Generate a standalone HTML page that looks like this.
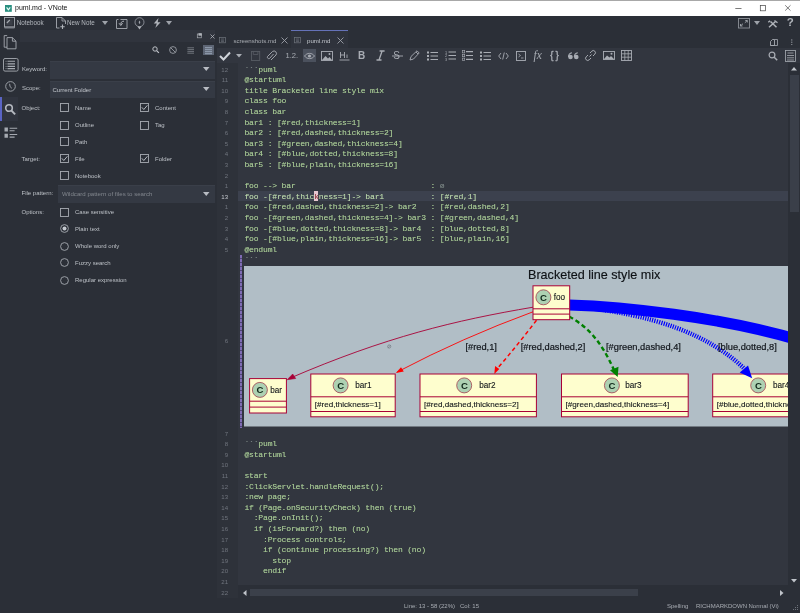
<!DOCTYPE html>
<html><head><meta charset="utf-8">
<style>
*{margin:0;padding:0;box-sizing:border-box}
html,body{width:800px;height:613px;overflow:hidden;background:#2b2f37;font-family:"Liberation Sans",sans-serif;position:relative}
.a{position:absolute}
svg.a{overflow:visible}
#title{left:0;top:0;width:800px;height:15.6px;background:#fff;border-top:1px solid #a8a8a8}
.tt{font-size:7px;color:#111;top:4px;left:15px;line-height:8px}
.lbl{position:absolute;font-size:6px;line-height:8px;color:#bcc0c6;white-space:nowrap}
.tb{position:absolute;font-size:6.3px;line-height:8px;color:#b4b8be;white-space:nowrap}
.tab{position:absolute;font-size:6.1px;line-height:8px;white-space:nowrap;top:36.6px}
.inp{position:absolute;background:#343943}
.ln{position:absolute;left:208px;width:20px;text-align:right;font-family:"Liberation Sans",sans-serif;font-size:6.1px;line-height:10.6px;color:#70757e;letter-spacing:-0.05px}
.cl{position:absolute;left:244.4px;font-family:"Liberation Mono",monospace;font-size:8.1px;letter-spacing:-0.205px;line-height:10.6px;color:#a8cb95;text-shadow:0 0 0.5px rgba(168,203,149,0.5);white-space:pre}
.cl .bt{color:#9499a2}
.cur{color:#bcd8ad}
.lncur{color:#c4c8ce}
.q{color:#6f757e}
.cur .k{color:#8a2030}
.st{position:absolute;font-size:6px;line-height:8px;color:#a8acb3;white-space:nowrap;top:601.5px}
</style></head><body>
<div id="root" style="position:absolute;left:0;top:0;width:800px;height:613px;will-change:transform">
<!-- title bar -->
<div id="title" class="a"></div>
<svg class="a" style="left:5px;top:4.5px" width="7" height="7" viewBox="0 0 7 7"><rect width="6.8" height="6.8" fill="#2a8f80"/><path d="M1.6 2.4 L3.4 4.8 L5.2 2.4" stroke="#e8fff8" stroke-width="1.2" fill="none"/></svg>
<div class="a tt">puml.md - VNote</div>
<svg class="a" style="left:734px;top:3px" width="60" height="10"><path d="M1.3 5.5h6.2" stroke="#444" stroke-width="0.7"/><rect x="26.3" y="2.4" width="5.2" height="5.4" fill="none" stroke="#444" stroke-width="0.7"/><path d="M51.2 2.3l5.3 5.3M56.5 2.3l-5.3 5.3" stroke="#444" stroke-width="0.7"/></svg>

<!-- main toolbar -->
<svg class="a" style="left:3.8px;top:17.3px" width="12" height="12"><rect x="0.5" y="0.5" width="10" height="9.5" fill="none" stroke="#a6aab1" stroke-width="0.9"/><path d="M0.5 10h10v1H0.5" fill="none" stroke="#8e9299" stroke-width="0.8"/><rect x="2.2" y="2.2" width="6.5" height="6" fill="#3a3e47"/><path d="M2.8 6l3-3" stroke="#a6aab1" stroke-width="1.1"/></svg>
<div class="tb" style="left:16.7px;top:19.3px">Notebook</div>
<svg class="a" style="left:55.5px;top:17.2px" width="12" height="13"><path d="M3.5 11H0.5V0.5h5.5l3.5 3.5V7" fill="none" stroke="#a6aab1" stroke-width="0.9"/><path d="M6 0.5v3.5h3.5" fill="none" stroke="#a6aab1" stroke-width="0.8"/><path d="M6.5 7.5v4.5M4.3 9.7h4.4" stroke="#b0b4ba" stroke-width="1.1"/></svg>
<div class="tb" style="left:67px;top:19.3px">New Note</div>
<svg class="a" style="left:102px;top:21px" width="7" height="5"><path d="M0 0h6l-3 4z" fill="#9ea2a9"/></svg>
<svg class="a" style="left:116px;top:17.5px" width="12" height="11"><path d="M0.5 1.5v9h10.5v-9h-6.5" fill="none" stroke="#a6aab1" stroke-width="0.9"/><path d="M1 1.5h1.5" stroke="#a6aab1" stroke-width="0.9"/><path d="M8 3.2C6 3.2 4.8 4 4.8 6.5M3 5.2l1.8 2.3 1.8-2.3" fill="none" stroke="#b0b4ba" stroke-width="1"/></svg>
<svg class="a" style="left:133.5px;top:16.5px" width="11" height="13"><circle cx="5.5" cy="5.2" r="4.5" fill="none" stroke="#9ea2a9" stroke-width="0.8"/><path d="M3.5 9.5h4l-2 3z" fill="#b0b4ba"/><path d="M5.5 3.5c-1 1.2-1 2.5 0 3.5c1-1 1-2.3 0-3.5z" fill="#9ea2a9"/></svg>
<svg class="a" style="left:152.5px;top:18px" width="9" height="10"><path d="M5.5 0L0.8 5.5h3L2.3 10 7.6 4.2H4.7z" fill="#b0b4ba"/></svg>
<svg class="a" style="left:166px;top:21px" width="7" height="5"><path d="M0 0h6l-3 4z" fill="#9ea2a9"/></svg>
<svg class="a" style="left:738px;top:17.5px" width="12" height="11"><rect x="0.5" y="0.5" width="11" height="9.5" fill="none" stroke="#8d9198" stroke-width="0.9"/><path d="M2.5 8l2.5-2.3M2.5 8v-2M2.5 8h2M9.3 2.5L6.8 4.8M9.3 2.5v2M9.3 2.5h-2" stroke="#a6aab1" stroke-width="0.9" fill="none"/></svg>
<svg class="a" style="left:754px;top:21px" width="7" height="5"><path d="M0 0h6l-3 4z" fill="#9ea2a9"/></svg>
<svg class="a" style="left:768px;top:19.5px" width="10" height="8"><path d="M1 7.2L7.5 1.5M2.5 1.5l6 5.7" stroke="#b0b4ba" stroke-width="1.5" fill="none"/><path d="M6.5 0.5l3 2.2M0.3 2.2l1.8-1.5" stroke="#b0b4ba" stroke-width="1.3" fill="none"/></svg>
<div class="a" style="left:786.8px;top:16px;font-size:11.5px;font-weight:bold;color:#b0b4ba;line-height:13px">?</div>

<!-- activity bar -->
<div class="a" style="left:0;top:97.3px;width:18.3px;height:23.4px;background:#30343e"></div>
<div class="a" style="left:0;top:97.3px;width:2.3px;height:23.4px;background:#5a64c4"></div>
<svg class="a" style="left:0px;top:34px" width="18" height="16"><path d="M7.2 1.6H4.2V13.2H7" fill="none" stroke="#a6aab1" stroke-width="0.9"/><path d="M7 3.6H12.4l3.6 3.6V14.8H7z M12.4 3.6v3.6h3.6" fill="none" stroke="#a6aab1" stroke-width="0.9"/></svg>
<svg class="a" style="left:2.9px;top:57.6px" width="16" height="14"><rect x="0.5" y="0.5" width="14.6" height="12.6" rx="1.5" fill="none" stroke="#a6aab1" stroke-width="0.9"/><path d="M2.6 3.3h0.9M2.6 5.9h0.9M2.6 8.4h0.9M2.6 10.6h0.9" stroke="#8f939a" stroke-width="1"/><path d="M4.5 3.3h7.5M4.5 5.9h7.5M4.5 8.4h7.5M4.5 10.6h7.5" stroke="#a6aab1" stroke-width="1.1"/></svg>
<svg class="a" style="left:4.5px;top:81px" width="11" height="11"><circle cx="5.5" cy="5.4" r="4.8" fill="none" stroke="#a6aab1" stroke-width="0.9"/><path d="M4.6 2.8l0.5 2.9 1.8 1.6" fill="none" stroke="#a6aab1" stroke-width="0.9"/></svg>
<svg class="a" style="left:4px;top:103px" width="13" height="13"><circle cx="5" cy="5" r="3.3" fill="none" stroke="#b5b9c0" stroke-width="1.6"/><path d="M7.5 7.6l3.6 3.8" stroke="#b5b9c0" stroke-width="2"/></svg>
<svg class="a" style="left:3.5px;top:126.5px" width="14" height="12"><path d="M0.5 0.5h3.4v4h-3.4zM0.5 6.8h3.4v4h-3.4z" fill="#a6aab1"/><path d="M5.6 1.2h7.6M5.6 3.8h5M5.6 7.5h7.6M5.6 10.1h5" stroke="#a6aab1" stroke-width="1.1"/></svg>

<!-- search panel -->
<div class="a" style="left:20px;top:30px;width:195px;height:12px;background:#30343d"></div>
<svg class="a" style="left:196.5px;top:33.3px" width="5" height="5"><rect x="0.3" y="1" width="4" height="3.8" fill="none" stroke="#a6aab1" stroke-width="0.7"/><rect x="1.5" y="0.2" width="3.3" height="2.5" fill="#b0b4ba"/></svg>
<svg class="a" style="left:209.8px;top:33.8px" width="5" height="5"><path d="M0.5 0.5l4 4M4.5 0.5l-4 4" stroke="#b0b4ba" stroke-width="0.8"/></svg>
<svg class="a" style="left:151.5px;top:46px" width="8" height="8"><circle cx="3" cy="3" r="2.2" fill="none" stroke="#c0c4ca" stroke-width="1"/><path d="M4.6 4.6l2.3 2.3" stroke="#c0c4ca" stroke-width="1.2"/></svg>
<svg class="a" style="left:168.5px;top:45.5px" width="8" height="8"><circle cx="4" cy="4" r="3.4" fill="none" stroke="#a6aab1" stroke-width="0.8"/><path d="M1.8 1.8l4.4 4.4" stroke="#a6aab1" stroke-width="0.8"/></svg>
<svg class="a" style="left:187px;top:46.5px" width="8" height="7"><path d="M0.5 0.8h6.5M0.5 2.6h6.5M0.5 4.4h6.5M0.5 6.2h6.5" stroke="#80858d" stroke-width="0.8"/><path d="M0.5 0.8h1M0.5 2.6h1M0.5 4.4h1M0.5 6.2h1" stroke="#5a5f67" stroke-width="0.8"/></svg>
<div class="a" style="left:203px;top:44.5px;width:11px;height:10.5px;background:#5d6574"></div>
<svg class="a" style="left:204px;top:45.5px" width="9" height="9"><path d="M1 1.7h7M1 3.7h7M1 5.7h7M1 7.7h7" stroke="#a5b2c6" stroke-width="0.8"/></svg>

<div class="lbl" style="left:22px;top:64.5px">Keyword:</div>
<div class="inp" style="left:50px;top:60.6px;width:165px;height:18.7px;border-top:1px solid #3a3f49"></div>
<svg class="a" style="left:203px;top:67px" width="7" height="5"><path d="M0 0h6.5l-3.25 4z" fill="#b8bcc3"/></svg>
<div class="lbl" style="left:22px;top:84px">Scope:</div>
<div class="inp" style="left:50px;top:80.9px;width:165px;height:16.9px;border-top:1px solid #3a3f49"></div>
<div class="lbl" style="left:52.5px;top:86px;color:#c3c7cd">Current Folder</div>
<svg class="a" style="left:203px;top:87px" width="7" height="5"><path d="M0 0h6.5l-3.25 4z" fill="#b8bcc3"/></svg>

<div class="lbl" style="left:21.5px;top:103.5px">Object:</div>
<div class="lbl" style="left:21.5px;top:154.5px">Target:</div>
<div class="lbl" style="left:21.5px;top:188.5px">File pattern:</div>
<div class="lbl" style="left:21.5px;top:208px">Options:</div>

<!-- checkboxes -->
<svg class="a" style="left:60px;top:103.00px" width="9" height="9"><rect x="0.5" y="0.5" width="8" height="8" fill="none" stroke="#a6aab1" stroke-width="0.9"/></svg>
<div class="lbl" style="left:75px;top:103.50px">Name</div>
<svg class="a" style="left:140px;top:103.00px" width="9" height="9"><rect x="0.5" y="0.5" width="8" height="8" fill="none" stroke="#a6aab1" stroke-width="0.9"/><path d="M1.8 4.3l2 2.2 3.6-4.2" fill="none" stroke="#c5c9cf" stroke-width="0.9"/></svg>
<div class="lbl" style="left:155px;top:103.50px">Content</div>
<svg class="a" style="left:60px;top:120.50px" width="9" height="9"><rect x="0.5" y="0.5" width="8" height="8" fill="none" stroke="#a6aab1" stroke-width="0.9"/></svg>
<div class="lbl" style="left:75px;top:121.00px">Outline</div>
<svg class="a" style="left:140px;top:120.50px" width="9" height="9"><rect x="0.5" y="0.5" width="8" height="8" fill="none" stroke="#a6aab1" stroke-width="0.9"/></svg>
<div class="lbl" style="left:155px;top:121.00px">Tag</div>
<svg class="a" style="left:60px;top:137.25px" width="9" height="9"><rect x="0.5" y="0.5" width="8" height="8" fill="none" stroke="#a6aab1" stroke-width="0.9"/></svg>
<div class="lbl" style="left:75px;top:137.75px">Path</div>
<svg class="a" style="left:60px;top:154.25px" width="9" height="9"><rect x="0.5" y="0.5" width="8" height="8" fill="none" stroke="#a6aab1" stroke-width="0.9"/><path d="M1.8 4.3l2 2.2 3.6-4.2" fill="none" stroke="#c5c9cf" stroke-width="0.9"/></svg>
<div class="lbl" style="left:75px;top:154.75px">File</div>
<svg class="a" style="left:140px;top:154.25px" width="9" height="9"><rect x="0.5" y="0.5" width="8" height="8" fill="none" stroke="#a6aab1" stroke-width="0.9"/><path d="M1.8 4.3l2 2.2 3.6-4.2" fill="none" stroke="#c5c9cf" stroke-width="0.9"/></svg>
<div class="lbl" style="left:155px;top:154.75px">Folder</div>
<svg class="a" style="left:60px;top:171.00px" width="9" height="9"><rect x="0.5" y="0.5" width="8" height="8" fill="none" stroke="#a6aab1" stroke-width="0.9"/></svg>
<div class="lbl" style="left:75px;top:171.50px">Notebook</div>
<svg class="a" style="left:60px;top:207.50px" width="9" height="9"><rect x="0.5" y="0.5" width="8" height="8" fill="none" stroke="#a6aab1" stroke-width="0.9"/></svg>
<div class="lbl" style="left:75px;top:208.00px">Case sensitive</div>
<svg class="a" style="left:60px;top:224.25px" width="9" height="9"><circle cx="4.5" cy="4.5" r="3.9" fill="none" stroke="#a6aab1" stroke-width="0.9"/><circle cx="4.5" cy="4.5" r="2" fill="#c5c9cf"/></svg>
<div class="lbl" style="left:75px;top:224.75px">Plain text</div>
<svg class="a" style="left:60px;top:241.75px" width="9" height="9"><circle cx="4.5" cy="4.5" r="3.9" fill="none" stroke="#a6aab1" stroke-width="0.9"/></svg>
<div class="lbl" style="left:75px;top:242.25px">Whole word only</div>
<svg class="a" style="left:60px;top:258.00px" width="9" height="9"><circle cx="4.5" cy="4.5" r="3.9" fill="none" stroke="#a6aab1" stroke-width="0.9"/></svg>
<div class="lbl" style="left:75px;top:258.50px">Fuzzy search</div>
<svg class="a" style="left:60px;top:275.50px" width="9" height="9"><circle cx="4.5" cy="4.5" r="3.9" fill="none" stroke="#a6aab1" stroke-width="0.9"/></svg>
<div class="lbl" style="left:75px;top:276.00px">Regular expression</div>

<div class="inp" style="left:57.5px;top:185px;width:157.5px;height:17.5px;border-top:1px solid #3a3f49"></div>
<div class="lbl" style="left:62px;top:189.8px;color:#82878e;font-size:6.1px">Wildcard pattern of files to search</div>
<svg class="a" style="left:203px;top:192px" width="7" height="5"><path d="M0 0h6.5l-3.25 4z" fill="#b8bcc3"/></svg>

<!-- editor tabs -->
<svg class="a" style="left:219.4px;top:36.8px" width="7" height="6.2"><rect x="0.4" y="0.4" width="6.2" height="5.4" fill="none" stroke="#6f747c" stroke-width="0.7"/><path d="M2 2h3M2 3.3h3M2 4.5h3" stroke="#6f747c" stroke-width="0.6"/></svg>
<div class="tab" style="left:233.4px;color:#a9adb3">screenshots.md</div>
<svg class="a" style="left:281px;top:37.2px" width="7" height="7"><path d="M0.5 0.5l6 6M6.5 0.5l-6 6" stroke="#9ea2a9" stroke-width="0.9"/></svg>
<div class="a" style="left:291px;top:30px;width:57px;height:19px;background:#2f333c"></div>
<div class="a" style="left:291px;top:30.2px;width:57px;height:1.2px;background:#6572b8"></div>
<svg class="a" style="left:293.5px;top:36.8px" width="7" height="6.2"><rect x="0.4" y="0.4" width="6.2" height="5.4" fill="none" stroke="#6f747c" stroke-width="0.7"/><path d="M2 2h3M2 3.3h3M2 4.5h3" stroke="#6f747c" stroke-width="0.6"/></svg>
<div class="tab" style="left:307px;color:#c4c8ce">puml.md</div>
<svg class="a" style="left:337px;top:37.2px" width="7" height="7"><path d="M0.5 0.5l6 6M6.5 0.5l-6 6" stroke="#9ea2a9" stroke-width="0.9"/></svg>
<svg class="a" style="left:770px;top:38.8px" width="9" height="7"><path d="M0.5 6.5V2.5L2.5 0.5H4.5V6.5z" fill="none" stroke="#a6aab1" stroke-width="0.9"/><path d="M4.5 0.5H7.5V6.5H0.5" fill="none" stroke="#a6aab1" stroke-width="0.8"/></svg>
<svg class="a" style="left:790px;top:39px" width="4" height="7"><circle cx="1.8" cy="0.9" r="0.6" fill="#a6aab1"/><circle cx="1.8" cy="3.2" r="0.6" fill="#a6aab1"/><circle cx="1.8" cy="5.5" r="0.6" fill="#a6aab1"/></svg>

<!-- editor background -->
<div class="a" style="left:217px;top:48.2px;width:583px;height:539.8px;background:#32363f"></div>
<div class="a" style="left:217px;top:63px;width:20.5px;height:535px;background:#2e323a"></div>
<div class="a" style="left:237.5px;top:190.6px;width:551px;height:10px;background:#3c414e"></div>
<div class="a" style="left:313.9px;top:190.8px;width:4.6px;height:10.2px;background:#e6c6cf"></div>

<!-- editor toolbar -->
<svg class="a" style="left:219.00px;top:50.50px" width="12" height="10" viewBox="0 0 12 10"><path d="M1 5l3.5 3.5L11 1.5" fill="none" stroke="#d0d4da" stroke-width="2"/></svg>
<svg class="a" style="left:235.60px;top:53.50px" width="6" height="4" viewBox="0 0 6 4"><path d="M0 0h6L3 3.5z" fill="#a9adb4"/></svg>
<svg class="a" style="left:250.80px;top:50.50px" width="9" height="10" viewBox="0 0 9 10"><rect x="0.5" y="0.5" width="8.2" height="9" fill="none" stroke="#585c64" stroke-width="0.9"/><path d="M2.3 0.5v3h4.6v-3" fill="none" stroke="#585c64" stroke-width="0.8"/></svg>
<svg class="a" style="left:266.20px;top:50.00px" width="10" height="11" viewBox="0 0 10 11"><path d="M7.5 4L3.5 8.5a1.5 1.5 0 0 1-2-2L6.5 1.5a2.5 2.5 0 0 1 3.5 3.5L5 10" fill="none" stroke="#a9adb4" stroke-width="0.9"/></svg>
<div class="a" style="left:285.5px;top:51px;font-size:7.6px;line-height:9px;color:#a9adb4">1.2.</div>
<div class="a" style="left:302.5px;top:48.5px;width:13px;height:13px;background:#4b515d"></div>
<svg class="a" style="left:303.50px;top:51.50px" width="11" height="8" viewBox="0 0 11 8"><path d="M0.5 4C3 0.5 8 0.5 10.5 4 8 7.5 3 7.5 0.5 4z" fill="none" stroke="#a9adb4" stroke-width="0.9"/><circle cx="5.5" cy="4" r="1.6" fill="#a9adb4"/></svg>
<svg class="a" style="left:320.70px;top:50.50px" width="12" height="10" viewBox="0 0 12 10"><rect x="0.5" y="0.5" width="11" height="9" fill="none" stroke="#a9adb4" stroke-width="0.9"/><path d="M1 9l3.5-4 2.5 2.5 1.5-1.5L11 9z" fill="#a9adb4"/><circle cx="8.5" cy="3" r="1" fill="#a9adb4"/></svg>
<svg class="a" style="left:338.90px;top:50.50px" width="11" height="10" viewBox="0 0 11 10"><path d="M1.5 1v6M5.5 1v6M1.5 4h4M8 3.5v3.5M0.5 9h10" fill="none" stroke="#a9adb4" stroke-width="0.9"/></svg>
<div class="a" style="left:358px;top:49.5px;font-size:10px;font-weight:bold;line-height:12px;color:#a9adb4">B</div>
<svg class="a" style="left:375.50px;top:50.00px" width="9" height="11" viewBox="0 0 9 11"><path d="M3.6 1h5M0.5 10h5M6.1 1L3 10" fill="none" stroke="#a9adb4" stroke-width="1.3"/></svg>
<div class="a" style="left:393.3px;top:49.5px;font-size:10px;line-height:12px;color:#a9adb4">S</div>
<svg class="a" style="left:392.10px;top:54.50px" width="11" height="2" viewBox="0 0 11 2"><path d="M0 1h11" stroke="#a9adb4" stroke-width="0.9"/></svg>
<svg class="a" style="left:409.30px;top:50.00px" width="11" height="11" viewBox="0 0 11 11"><path d="M1 10l1-3.5L8 0.8l2.2 2.2L4.5 9z M7 2l2 2" fill="none" stroke="#a9adb4" stroke-width="0.9"/></svg>
<svg class="a" style="left:427.00px;top:50.50px" width="11" height="10" viewBox="0 0 11 10"><path d="M0 1.5h2M0 5h2M0 8.5h2" stroke="#a9adb4" stroke-width="1.8"/><path d="M3.5 1.5h7.5M3.5 5h7.5M3.5 8.5h7.5" stroke="#a9adb4" stroke-width="1.2"/></svg>
<svg class="a" style="left:445.00px;top:50.00px" width="11" height="11" viewBox="0 0 11 11"><text x="0" y="3.5" font-size="3.8" fill="#a9adb4" font-family="Liberation Sans">1</text><text x="0" y="7" font-size="3.8" fill="#a9adb4" font-family="Liberation Sans">2</text><text x="0" y="10.5" font-size="3.8" fill="#a9adb4" font-family="Liberation Sans">3</text><path d="M3.5 2h7.5M3.5 5.5h7.5M3.5 9h7.5" stroke="#a9adb4" stroke-width="1.2"/></svg>
<svg class="a" style="left:462.20px;top:50.00px" width="11" height="11" viewBox="0 0 11 11"><rect x="0.3" y="0.5" width="2.4" height="2.4" fill="none" stroke="#a9adb4" stroke-width="0.6"/><rect x="0.3" y="4.3" width="2.4" height="2.4" fill="none" stroke="#a9adb4" stroke-width="0.6"/><rect x="0.3" y="8.1" width="2.4" height="2.4" fill="none" stroke="#a9adb4" stroke-width="0.6"/><path d="M4 1.7h7M4 5.5h7M4 9.3h7" stroke="#a9adb4" stroke-width="1.2"/></svg>
<svg class="a" style="left:480.20px;top:50.50px" width="11" height="10" viewBox="0 0 11 10"><path d="M0 1.5h2M0 5h2M0 8.5h2" stroke="#a9adb4" stroke-width="1.8"/><path d="M3.5 1.5h7.5M3.5 5h7.5M3.5 8.5h7.5" stroke="#a9adb4" stroke-width="1.2"/></svg>
<svg class="a" style="left:497.90px;top:51.50px" width="11" height="8" viewBox="0 0 11 8"><path d="M3 1L0.7 4 3 7M8 1l2.3 3L8 7M6.3 0.5L4.7 7.5" fill="none" stroke="#a9adb4" stroke-width="0.9"/></svg>
<svg class="a" style="left:515.90px;top:50.50px" width="10" height="10" viewBox="0 0 10 10"><rect x="0.5" y="0.5" width="9" height="9" fill="none" stroke="#a9adb4" stroke-width="0.9"/><path d="M2.5 3l2 1.5-2 1.5M5 7h2.5" fill="none" stroke="#a9adb4" stroke-width="0.8"/></svg>
<div class="a" style="left:533.5px;top:48.5px;font-size:11.5px;font-style:italic;font-family:'Liberation Serif',serif;line-height:12px;color:#a9adb4">fx</div>
<div class="a" style="left:550px;top:48.8px;font-size:10.5px;line-height:12px;color:#a9adb4;-webkit-text-stroke:0.3px #a9adb4">{&#8201;}</div>
<svg class="a" style="left:568.30px;top:51.50px" width="11" height="8" viewBox="0 0 11 8"><circle cx="2.5" cy="5" r="2.3" fill="#a9adb4"/><circle cx="8.3" cy="5" r="2.3" fill="#a9adb4"/><path d="M0.5 5C0.5 2.5 2 1 4 0.7M6.3 5c0-2.5 1.5-4 3.5-4.3" fill="none" stroke="#a9adb4" stroke-width="1.1"/></svg>
<svg class="a" style="left:585.40px;top:50.00px" width="11" height="11" viewBox="0 0 11 11"><path d="M4.5 6.5L6.5 4.5M5 3l1.8-1.8a2 2 0 0 1 3 3L8 6M6 8L4.2 9.8a2 2 0 0 1-3-3L3 5" fill="none" stroke="#a9adb4" stroke-width="1"/></svg>
<svg class="a" style="left:602.70px;top:51.00px" width="12" height="9" viewBox="0 0 12 9"><rect x="0.5" y="0.5" width="11" height="8" fill="none" stroke="#a9adb4" stroke-width="0.9"/><path d="M1 8l3-3.5 2.5 2 1.5-1.5L11 8z" fill="#a9adb4"/><circle cx="8.5" cy="2.8" r="1" fill="#a9adb4"/></svg>
<svg class="a" style="left:620.80px;top:50.00px" width="11" height="11" viewBox="0 0 11 11"><rect x="0.5" y="0.5" width="10" height="10" fill="none" stroke="#a9adb4" stroke-width="0.9"/><path d="M0.5 3.8h10M0.5 7.2h10M3.8 0.5v10M7.2 0.5v10" stroke="#a9adb4" stroke-width="0.8"/></svg>
<svg class="a" style="left:767.90px;top:50.50px" width="10" height="10" viewBox="0 0 10 10"><circle cx="4" cy="4" r="2.9" fill="none" stroke="#a9adb4" stroke-width="1.2"/><path d="M6.2 6.2l3 3" stroke="#a9adb4" stroke-width="1.5"/></svg>
<svg class="a" style="left:784.90px;top:49.50px" width="11" height="12" viewBox="0 0 11 12"><rect x="0.5" y="0.5" width="10" height="11" fill="none" stroke="#a9adb4" stroke-width="0.8"/><path d="M2.5 3h6M2 5.5h7M2 7.8h7M2 10h7" stroke="#a9adb4" stroke-width="0.8"/></svg>

<div class="ln" style="top:64.6px">12</div>
<div class="cl" style="top:64.6px"><span class="bt">```</span>puml</div>
<div class="ln" style="top:75.2px">11</div>
<div class="cl" style="top:75.2px">@startuml</div>
<div class="ln" style="top:85.8px">10</div>
<div class="cl" style="top:85.8px">title Bracketed line style mix</div>
<div class="ln" style="top:96.4px">9</div>
<div class="cl" style="top:96.4px">class foo</div>
<div class="ln" style="top:107.0px">8</div>
<div class="cl" style="top:107.0px">class bar</div>
<div class="ln" style="top:117.6px">7</div>
<div class="cl" style="top:117.6px">bar1 : [#red,thickness=1]</div>
<div class="ln" style="top:128.2px">6</div>
<div class="cl" style="top:128.2px">bar2 : [#red,dashed,thickness=2]</div>
<div class="ln" style="top:138.8px">5</div>
<div class="cl" style="top:138.8px">bar3 : [#green,dashed,thickness=4]</div>
<div class="ln" style="top:149.4px">4</div>
<div class="cl" style="top:149.4px">bar4 : [#blue,dotted,thickness=8]</div>
<div class="ln" style="top:160.0px">3</div>
<div class="cl" style="top:160.0px">bar5 : [#blue,plain,thickness=16]</div>
<div class="ln" style="top:170.6px">2</div>
<div class="cl" style="top:170.6px"></div>
<div class="ln" style="top:181.2px">1</div>
<div class="cl" style="top:181.2px">foo --&gt; bar                             : <span class="q">ø</span></div>
<div class="ln lncur" style="top:191.8px">13</div>
<div class="cl cur" style="top:191.8px">foo -[#red,thic<span class="k">k</span>ness=1]-&gt; bar1          : [#red,1]</div>
<div class="ln" style="top:202.4px">1</div>
<div class="cl" style="top:202.4px">foo -[#red,dashed,thickness=2]-&gt; bar2   : [#red,dashed,2]</div>
<div class="ln" style="top:213.0px">2</div>
<div class="cl" style="top:213.0px">foo -[#green,dashed,thickness=4]-&gt; bar3 : [#green,dashed,4]</div>
<div class="ln" style="top:223.6px">3</div>
<div class="cl" style="top:223.6px">foo -[#blue,dotted,thickness=8]-&gt; bar4  : [blue,dotted,8]</div>
<div class="ln" style="top:234.2px">4</div>
<div class="cl" style="top:234.2px">foo -[#blue,plain,thickness=16]-&gt; bar5  : [blue,plain,16]</div>
<div class="ln" style="top:244.8px">5</div>
<div class="cl" style="top:244.8px">@enduml</div>
<div class="cl" style="top:255.4px"><span class="bt">```</span></div>
<div class="ln" style="top:335.7px">6</div>
<div class="ln" style="top:428.5px">7</div>
<div class="cl" style="top:428.5px"></div>
<div class="ln" style="top:439.1px">8</div>
<div class="cl" style="top:439.1px"><span class="bt">```</span>puml</div>
<div class="ln" style="top:449.7px">9</div>
<div class="cl" style="top:449.7px">@startuml</div>
<div class="ln" style="top:460.3px">10</div>
<div class="cl" style="top:460.3px"></div>
<div class="ln" style="top:470.9px">11</div>
<div class="cl" style="top:470.9px">start</div>
<div class="ln" style="top:481.5px">12</div>
<div class="cl" style="top:481.5px">:ClickServlet.handleRequest();</div>
<div class="ln" style="top:492.1px">13</div>
<div class="cl" style="top:492.1px">:new page;</div>
<div class="ln" style="top:502.7px">14</div>
<div class="cl" style="top:502.7px">if (Page.onSecurityCheck) then (true)</div>
<div class="ln" style="top:513.3px">15</div>
<div class="cl" style="top:513.3px">  :Page.onInit();</div>
<div class="ln" style="top:523.9px">16</div>
<div class="cl" style="top:523.9px">  if (isForward?) then (no)</div>
<div class="ln" style="top:534.5px">17</div>
<div class="cl" style="top:534.5px">    :Process controls;</div>
<div class="ln" style="top:545.1px">18</div>
<div class="cl" style="top:545.1px">    if (continue processing?) then (no)</div>
<div class="ln" style="top:555.7px">19</div>
<div class="cl" style="top:555.7px">      stop</div>
<div class="ln" style="top:566.3px">20</div>
<div class="cl" style="top:566.3px">    endif</div>
<div class="ln" style="top:576.9px">21</div>
<div class="cl" style="top:576.9px"></div>
<div class="ln" style="top:587.5px">22</div>
<div class="cl" style="top:587.5px"></div>

<!-- diagram -->
<svg class="a" style="left:243.8px;top:265.5px" width="545" height="160.5" viewBox="243.8 265.5 545 160.5">
<rect x="243.8" y="265.5" width="545" height="160.5" fill="#b1bec6"/>
<path d="M532.8 306.7C455.1 319.8 385.6 336.4 289 378" fill="none" stroke="#a80036" stroke-width="0.9"/>
<path d="M532.8 311.3Q462.2 337.2 397 371.5" fill="none" stroke="#ff0000" stroke-width="0.9"/>
<path d="M536.3 319.7Q517 345 495.5 370" fill="none" stroke="#ff0000" stroke-width="1.5" stroke-dasharray="4 3"/>
<path d="M569 316C585 325 600 338 614 370" fill="none" stroke="#008000" stroke-width="2.4" stroke-dasharray="4.5 3"/>
<path d="M569 305.5C655 313 710 335 745 369" fill="none" stroke="#0000ff" stroke-width="4.5" stroke-dasharray="1.2 1.2"/>
<path d="M569 304.5C620 306 720 316 800 340" fill="none" stroke="#0000ff" stroke-width="11"/>
<rect x="532.8" y="285.3" width="36.700000000000045" height="33.89999999999998" fill="#fefece" stroke="#a80036" stroke-width="1"/><path d="M532.8 308.3H569.5M532.8 313.6H569.5" stroke="#a80036" stroke-width="1"/><circle cx="543.2" cy="296.80" r="7.5" fill="#add1b2" stroke="#a04050" stroke-width="0.8"/><text x="543.4000000000001" y="300.20" text-anchor="middle" font-family="Liberation Sans" font-weight="bold" font-size="9.6" fill="#10281a">C</text><text x="553.5" y="299.70" font-family="Liberation Sans" font-size="8.2" fill="#14181c" stroke="#14181c" stroke-width="0.12">foo</text>
<rect x="249.4" y="378.1" width="36.79999999999998" height="34.39999999999998" fill="#fefece" stroke="#a80036" stroke-width="1"/><path d="M249.4 400.7H286.2M249.4 406.6H286.2" stroke="#a80036" stroke-width="1"/><circle cx="259.7" cy="389.40" r="7.5" fill="#add1b2" stroke="#a04050" stroke-width="0.8"/><text x="259.9" y="392.80" text-anchor="middle" font-family="Liberation Sans" font-weight="bold" font-size="9.6" fill="#10281a">C</text><text x="270" y="392.30" font-family="Liberation Sans" font-size="8.2" fill="#14181c" stroke="#14181c" stroke-width="0.12">bar</text>
<rect x="310.6" y="373.5" width="84.39999999999998" height="42.80000000000001" fill="#fefece" stroke="#a80036" stroke-width="1"/><path d="M310.6 396.3H395M310.6 411H395" stroke="#a80036" stroke-width="1"/><circle cx="340.4" cy="384.90" r="7.5" fill="#add1b2" stroke="#a04050" stroke-width="0.8"/><text x="340.59999999999997" y="388.30" text-anchor="middle" font-family="Liberation Sans" font-weight="bold" font-size="9.6" fill="#10281a">C</text><text x="355" y="387.80" font-family="Liberation Sans" font-size="8.2" fill="#14181c" stroke="#14181c" stroke-width="0.12">bar1</text><text x="314.6" y="406.45" font-family="Liberation Sans" font-size="8.1" fill="#14181c" stroke="#14181c" stroke-width="0.12">[#red,thickness=1]</text>
<rect x="419.8" y="373.5" width="116.40000000000003" height="42.80000000000001" fill="#fefece" stroke="#a80036" stroke-width="1"/><path d="M419.8 396.3H536.2M419.8 411H536.2" stroke="#a80036" stroke-width="1"/><circle cx="464" cy="384.90" r="7.5" fill="#add1b2" stroke="#a04050" stroke-width="0.8"/><text x="464.2" y="388.30" text-anchor="middle" font-family="Liberation Sans" font-weight="bold" font-size="9.6" fill="#10281a">C</text><text x="479" y="387.80" font-family="Liberation Sans" font-size="8.2" fill="#14181c" stroke="#14181c" stroke-width="0.12">bar2</text><text x="423.8" y="406.45" font-family="Liberation Sans" font-size="8.1" fill="#14181c" stroke="#14181c" stroke-width="0.12">[#red,dashed,thickness=2]</text>
<rect x="561.3" y="373.5" width="126.70000000000005" height="42.80000000000001" fill="#fefece" stroke="#a80036" stroke-width="1"/><path d="M561.3 396.3H688M561.3 411H688" stroke="#a80036" stroke-width="1"/><circle cx="611.7" cy="384.90" r="7.5" fill="#add1b2" stroke="#a04050" stroke-width="0.8"/><text x="611.9000000000001" y="388.30" text-anchor="middle" font-family="Liberation Sans" font-weight="bold" font-size="9.6" fill="#10281a">C</text><text x="625" y="387.80" font-family="Liberation Sans" font-size="8.2" fill="#14181c" stroke="#14181c" stroke-width="0.12">bar3</text><text x="565.3" y="406.45" font-family="Liberation Sans" font-size="8.1" fill="#14181c" stroke="#14181c" stroke-width="0.12">[#green,dashed,thickness=4]</text>
<rect x="712.5" y="373.5" width="117.5" height="42.80000000000001" fill="#fefece" stroke="#a80036" stroke-width="1"/><path d="M712.5 396.3H830M712.5 411H830" stroke="#a80036" stroke-width="1"/><circle cx="758" cy="384.90" r="7.5" fill="#add1b2" stroke="#a04050" stroke-width="0.8"/><text x="758.2" y="388.30" text-anchor="middle" font-family="Liberation Sans" font-weight="bold" font-size="9.6" fill="#10281a">C</text><text x="772.7" y="387.80" font-family="Liberation Sans" font-size="8.2" fill="#14181c" stroke="#14181c" stroke-width="0.12">bar4</text><text x="716.5" y="406.45" font-family="Liberation Sans" font-size="8.1" fill="#14181c" stroke="#14181c" stroke-width="0.12">[#blue,dotted,thickness=8]</text>
<path d="M752 377.8L739.5 372L747.8 365z" fill="#0000ff"/>
<path d="M287 379.2l8.5-1.2-3-4.5z" fill="#a80036" stroke="#a80036" stroke-width="0.6"/>
<path d="M395.6 372.5l8-1.5-2.8-4.3z" fill="#ff0000"/>
<path d="M494.1 373.5l0.8-8 4.2 3z" fill="#ff0000"/>
<path d="M617.5 376.5L609.8 369.8L618.3 366.3z" fill="#008000"/>
<text x="527.8" y="278.3" font-family="Liberation Sans" font-size="12.6" fill="#0e1216" stroke="#0e1216" stroke-width="0.15">Bracketed line style mix</text>
<text x="465.2" y="349.8" font-family="Liberation Sans" font-size="9.3" fill="#10141a" stroke="#10141a" stroke-width="0.18">[#red,1]</text>
<text x="520.5" y="349.8" font-family="Liberation Sans" font-size="9.3" fill="#10141a" stroke="#10141a" stroke-width="0.18">[#red,dashed,2]</text>
<text x="605.8" y="349.8" font-family="Liberation Sans" font-size="9.3" fill="#10141a" stroke="#10141a" stroke-width="0.18">[#green,dashed,4]</text>
<text x="717.7" y="349.8" font-family="Liberation Sans" font-size="9.3" fill="#10141a" stroke="#10141a" stroke-width="0.18">[blue,dotted,8]</text>
<circle cx="389" cy="346" r="1.6" fill="none" stroke="#6a7078" stroke-width="0.6"/><path d="M387.6 347.6l2.8-3" stroke="#6a7078" stroke-width="0.5"/>
</svg>
<div class="a" style="left:240.3px;top:254.5px;width:2.2px;height:173px;background:repeating-linear-gradient(#7f6cb4 0 3px,#4f4676 3px 4px)"></div>

<!-- scrollbars -->
<div class="a" style="left:788px;top:63px;width:12px;height:525px;background:#2b2f37"></div>
<div class="a" style="left:790px;top:75px;width:8.5px;height:137px;background:#3a3f49"></div>
<svg class="a" style="left:791px;top:67px" width="6" height="4"><path d="M0 3.5h6L3 0z" fill="#c0c4ca"/></svg>
<svg class="a" style="left:791px;top:579px" width="6" height="4"><path d="M0 0h6L3 3.5z" fill="#c0c4ca"/></svg>
<div class="a" style="left:237.5px;top:585px;width:551px;height:13px;background:#2b2f37"></div>
<div class="a" style="left:250px;top:588.7px;width:388px;height:7.8px;background:#3b404a"></div>
<svg class="a" style="left:242.5px;top:589.5px" width="4" height="6"><path d="M3.5 0v6L0 3z" fill="#c0c4ca"/></svg>
<svg class="a" style="left:780px;top:590px" width="4" height="6"><path d="M0 0v6L3.5 3z" fill="#c0c4ca"/></svg>
<div class="a" style="left:788px;top:588px;width:12px;height:10px;background:#2b2f37"></div>

<!-- status bar -->
<div class="st" style="left:404px">Line: 13 - 58 (22%)&nbsp;&nbsp;&nbsp;Col: 15</div>
<div class="st" style="left:667px">Spelling</div>
<div class="st" style="left:696px">RICHMARKDOWN</div>
<div class="st" style="left:748.5px">Normal (Vi)</div>
<svg class="a" style="left:792px;top:605px" width="8" height="8"><g fill="#6d727a"><rect x="5" y="0" width="1" height="1"/><rect x="3" y="2" width="1" height="1"/><rect x="5" y="2" width="1" height="1"/><rect x="1" y="4" width="1" height="1"/><rect x="3" y="4" width="1" height="1"/><rect x="5" y="4" width="1" height="1"/></g></svg>
</div>
</body></html>
